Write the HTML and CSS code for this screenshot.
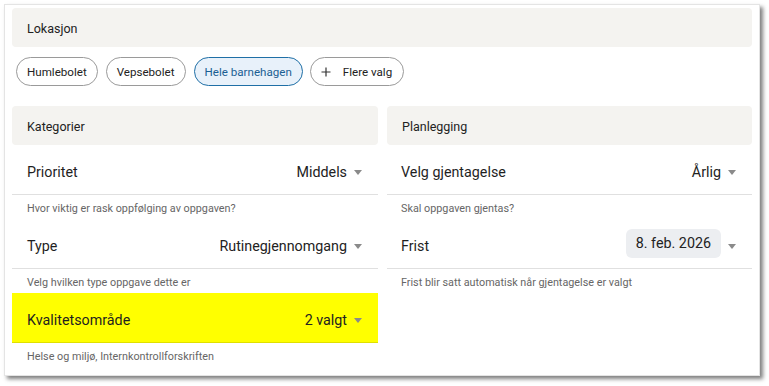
FILE: index.html
```html
<!DOCTYPE html>
<html lang="no">

<head>
	<meta charset="UTF-8">
	<title>Oppgave</title>
	<link rel="stylesheet" href="styles.css">
</head>

<body>
	<div class="card">
		<div class="section-head">Lokasjon</div>
		<div class="chips">
			<span class="chip">Humlebolet</span>
			<span class="chip">Vepsebolet</span>
			<span class="chip active">Hele barnehagen</span>
			<span class="chip more">
				<svg width="10" height="10" viewBox="0 0 10 10"><path d="M5 0.5v9M0.5 5h9" stroke="#333" stroke-width="1.2" fill="none" /></svg>
				Flere valg
			</span>
		</div>

		<div class="cols">
			<div class="col">
				<div class="section-head">Kategorier</div>
				<div class="field">
					<span class="label">Prioritet</span>
					<span class="value">Middels</span>
					<i class="arrow"></i>
				</div>
				<p class="help">Hvor viktig er rask oppfølging av oppgaven?</p>
				<div class="field">
					<span class="label">Type</span>
					<span class="value">Rutinegjennomgang</span>
					<i class="arrow"></i>
				</div>
				<p class="help">Velg hvilken type oppgave dette er</p>
				<div class="field marked">
					<span class="label">Kvalitetsområde</span>
					<span class="value">2 valgt</span>
					<i class="arrow"></i>
				</div>
				<p class="help">Helse og miljø, Internkontrollforskriften</p>
			</div>

			<div class="col">
				<div class="section-head">Planlegging</div>
				<div class="field">
					<span class="label">Velg gjentagelse</span>
					<span class="value">Årlig</span>
					<i class="arrow"></i>
				</div>
				<p class="help">Skal oppgaven gjentas?</p>
				<div class="field">
					<span class="label">Frist</span>
					<span class="value date">8. feb. 2026</span>
					<i class="arrow"></i>
				</div>
				<p class="help">Frist blir satt automatisk når gjentagelse er valgt</p>
			</div>
		</div>
	</div>
</body>

</html>
```

FILE: styles.css
```css
* {
	margin: 0;
	padding: 0;
	box-sizing: border-box;
}

body {
	background: #fff;
	font-family: Roboto, "Liberation Sans", sans-serif;
	color: #1f1f1f;
	padding: 4px 9px 10px 4px;
}

.card {
	width: 756px;
	height: 372px;
	background: #fff;
	border: 1px solid #e4e4e4;
	box-shadow: 3px 3px 4px rgba(0, 0, 0, 0.5);
	padding: 3px 7px;
}

.section-head {
	height: 39px;
	line-height: 41px;
	background: #f4f3f0;
	border-radius: 4px;
	padding-left: 15px;
	font-size: 12.5px;
	color: #222;
}

.chips {
	display: flex;
	gap: 8px;
	margin: 10px 0 20px 4px;
}

.chip {
	display: inline-flex;
	align-items: center;
	height: 29px;
	padding: 0 10px;
	border: 1px solid #9a9a9a;
	border-radius: 15px;
	font-size: 11.6px;
	color: #222;
}

.chip.active {
	background: #e8f1fa;
	border-color: #1f6fa6;
	color: #1b5f93;
}

.chip.more {
	margin-left: -1px;
	padding-left: 10px;
	padding-right: 11px;
}

.chip.more svg {
	margin-right: 12px;
}

.cols {
	display: grid;
	grid-template-columns: 366px 365px;
	gap: 9px;
}

.field {
	display: flex;
	align-items: center;
	height: 50px;
	border-bottom: 1px solid rgba(0, 0, 0, 0.12);
	padding: 5px 16px 0 15px;
	font-size: 14.3px;
}

.col:last-child .field {
	padding-left: 14px;
}

.field .label {
	flex: 1;
}

.field.marked {
	background: #ffff00;
}

.field .value {
	color: #222;
}

.field .date {
	background: #eceef1;
	border-radius: 6px;
	height: 29px;
	line-height: 29px;
	padding: 0 10px;
	margin-top: -5px;
}

.arrow {
	width: 0;
	height: 0;
	border-left: 4.5px solid transparent;
	border-right: 4.5px solid transparent;
	border-top: 5px solid #8a8a8a;
	margin-left: 7px;
}

.help {
	height: 24px;
	line-height: 28px;
	padding-left: 15px;
	font-size: 10.8px;
	color: #666;
}

.col:last-child .help {
	padding-left: 14px;
}
```
